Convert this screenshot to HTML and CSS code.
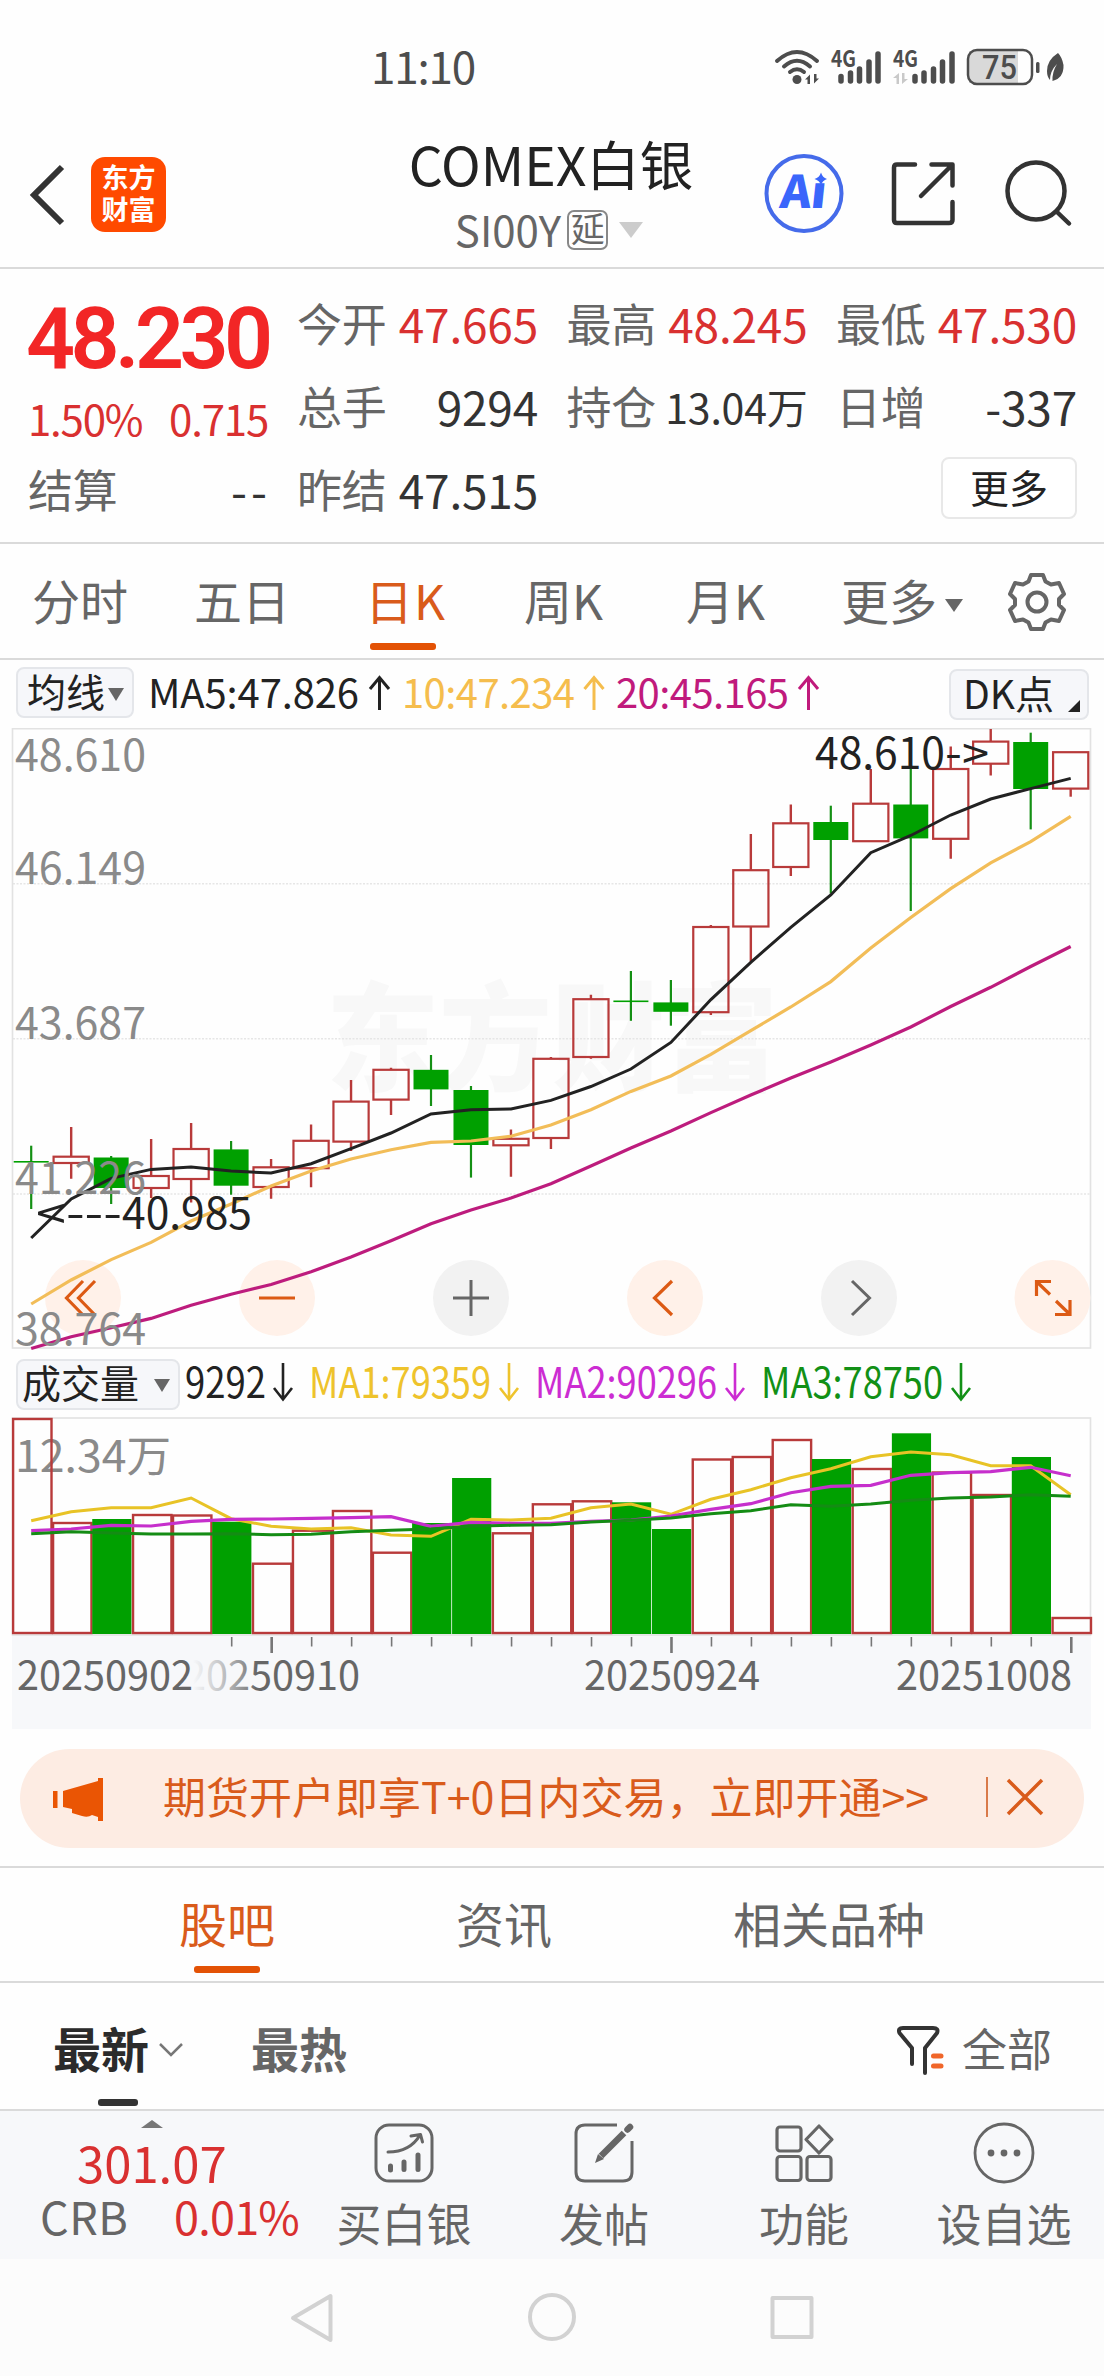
FILE: index.html
```html
<!DOCTYPE html>
<html lang="zh-CN">
<head>
  <meta charset="UTF-8">
  <meta name="viewport" content="width=device-width, initial-scale=1.0">
  <title>COMEX白银</title>
  <link rel="stylesheet" href="styles.css">
</head>
<body>
  <div class="status-bar">
    <span class="time">11:10</span>
    <svg class="status-icons" width="300" height="44" viewBox="770 45 300 44">
      <g fill="none" stroke="#4d4d4d" stroke-width="4" stroke-linecap="round">
        <path d="M777 61 Q797 43 817 61"/>
        <path d="M784 66.500 Q797 55 810 66.500"/>
        <path d="M790 72 Q797 66.500 804 72"/>
      </g>
      <g fill="#4d4d4d">
        <circle cx="797" cy="79.500" r="4.500"/>
        <path d="M805 79.500 l5 -5 v9.500 h-2.500 v-4.500zM819 78.500 l-5 5 v-9.500 h2.500 v4.500z"/>
        <text class="net" x="831" y="67" textLength="25" lengthAdjust="spacingAndGlyphs">4G</text>
        <text class="net" x="893" y="67" textLength="25" lengthAdjust="spacingAndGlyphs">4G</text>
      </g>
      <path fill="#c9c9c9" d="M893 78 l6 -5 v11 h-2.500 v-6zM908 79 l-6 5 v-11 h2.500 v6z"/>
      <g stroke="#4d4d4d" stroke-width="5.500" stroke-linecap="round">
        <path d="M841 76.500V81M850.500 73V81M859.500 69V81M869 62V81M878 54V81"/>
        <path d="M915 76.500V81M924 73V81M933.500 69V81M942.500 62V81M952 54V81"/>
      </g>
      <rect x="969" y="51" width="49" height="32" fill="#d9d9d9"/>
      <rect x="968" y="50" width="64" height="34" rx="9" fill="none" stroke="#4d4d4d" stroke-width="2.500"/>
      <text class="battery" x="982" y="79" textLength="35" lengthAdjust="spacingAndGlyphs">75</text>
      <rect x="1036" y="62" width="3.500" height="11" rx="1.500" fill="#4d4d4d"/>
      <path fill="#4d4d4d" d="M1058 53 Q1047 60 1047 71 Q1047 77 1050 80 Q1050 71 1057 64 Q1052 72 1052.500 81 Q1064 78 1063.500 65 Q1062 57 1058 53z"/>
    </svg>
  </div>

  <header>
    <svg class="back" width="36" height="62" viewBox="0 0 36 62"><path d="M34 3 L6 31 L34 59" fill="none" stroke="#333" stroke-width="6"/></svg>
    <div class="logo"><span>东方</span><span>财富</span></div>
    <div class="title">
      <h1>COMEX白银</h1>
      <p><span>SI00Y</span><i>延</i><b></b></p>
    </div>
    <svg class="header-icons" width="320" height="84" viewBox="760 151 320 84" fill="none">
      <circle cx="804" cy="193.500" r="37.500" stroke="#456bea" stroke-width="4"/>
      <text class="ai" transform="translate(779 208) skewX(-6)" textLength="46" lengthAdjust="spacingAndGlyphs">Aı</text>
      <path fill="#3a66fb" d="M821 172.500 Q822.500 177.500 827 179 Q822.500 180.500 821 185 Q819.500 180.500 814.500 179 Q819.500 177.500 821 172.500z"/>
      <g stroke="#333" stroke-width="4.500" stroke-linecap="round" stroke-linejoin="round">
        <path d="M915 164.500H897Q894 164.500 894 167.500V220Q894 223 897 223H949Q952.500 223 952.500 220V202"/>
        <path d="M931.500 164.500H952.500V185.500M952 165L921 196"/>
        <circle cx="1036" cy="191" r="28.500"/>
        <path d="M1057 212L1069 223.500"/>
      </g>
    </svg>
  </header>

  <section class="quote">
    <div class="price-col">
      <strong>48.230</strong>
      <div class="change"><span>1.50%</span><span>0.715</span></div>
      <div class="cell"><label>结算</label><span class="dashes">--</span></div>
    </div>
    <div class="cells">
      <div class="cell up"><label>今开</label><span>47.665</span></div>
      <div class="cell up"><label>最高</label><span>48.245</span></div>
      <div class="cell up"><label>最低</label><span>47.530</span></div>
      <div class="cell"><label>总手</label><span>9294</span></div>
      <div class="cell"><label>持仓</label><span class="small">13.04万</span></div>
      <div class="cell"><label>日增</label><span>-337</span></div>
      <div class="cell"><label>昨结</label><span>47.515</span></div>
      <button class="more">更多</button>
    </div>
  </section>

  <nav class="period">
    <a>分时</a>
    <a>五日</a>
    <a class="active">日K</a>
    <a>周K</a>
    <a>月K</a>
    <a>更多<i class="down"></i></a>
    <svg width="60" height="60" viewBox="-30 -30 60 60" fill="none" stroke="#666" stroke-width="4" stroke-linejoin="round">
      <path d="M-6 -27H6L8.500 -20.500L14 -17.500L22 -19L27 -8L22 -3V3L27 8L22 19L14 17.500L8.500 20.500L6 27H-6L-8.500 20.500L-14 17.500L-22 19L-27 8L-22 3V-3L-27 -8L-22 -19L-14 -17.500L-8.500 -20.500z"/>
      <circle r="9.500"/>
    </svg>
  </nav>

  <div class="indicator">
    <span class="pick">均线<i class="down"></i></span>
    <svg width="700" height="68" viewBox="140 660 700 68">
      <g class="ma-text">
        <text x="148" y="708" fill="#222" textLength="211">MA5:47.826</text>
        <text x="402" y="708" fill="#f5bd4d" textLength="173">10:47.234</text>
        <text x="616" y="708" fill="#c01a7c" textLength="173">20:45.165</text>
      </g>
      <g fill="none" stroke-width="3">
        <path stroke="#222" d="M379.500 710V678M370 689L379.500 677.500L389 689"/>
        <path stroke="#f5bd4d" d="M594 710V678M584.500 689L594 677.500L603.500 689"/>
        <path stroke="#c01a7c" d="M808.500 710V678M799 689L808.500 677.500L818 689"/>
      </g>
    </svg>
    <span class="pick dk">DK点<i class="corner"></i></span>
  </div>

  <svg id="kline" class="chart" width="1104" height="624" viewBox="0 728 1104 624"></svg>

  <div class="indicator volume-bar">
    <span class="pick">成交量<i class="down"></i></span>
    <svg width="820" height="64" viewBox="180 1352 820 64">
      <g class="vol-text">
        <text x="185" y="1398" fill="#222" textLength="81" lengthAdjust="spacingAndGlyphs">9292</text>
        <text x="309" y="1398" fill="#eec32c" textLength="182" lengthAdjust="spacingAndGlyphs">MA1:79359</text>
        <text x="535" y="1398" fill="#cc2cd2" textLength="182" lengthAdjust="spacingAndGlyphs">MA2:90296</text>
        <text x="761" y="1398" fill="#129016" textLength="182" lengthAdjust="spacingAndGlyphs">MA3:78750</text>
      </g>
      <g fill="none" stroke-width="2.600">
        <path stroke="#222" d="M283 1363V1399M274 1388L283 1399.500L292 1388"/>
        <path stroke="#eec32c" d="M509 1363V1399M500 1388L509 1399.500L518 1388"/>
        <path stroke="#cc2cd2" d="M735 1363V1399M726 1388L735 1399.500L744 1388"/>
        <path stroke="#129016" d="M961 1363V1399M952 1388L961 1399.500L970 1388"/>
      </g>
    </svg>
  </div>

  <svg id="volume" class="chart" width="1104" height="314" viewBox="0 1416 1104 314"></svg>

  <div class="banner">
    <svg width="54" height="46" viewBox="52 1775 54 46" fill="#ea5504">
      <rect x="53" y="1790" width="4.500" height="17"/>
      <path d="M63 1790L98 1780V1777H103V1820H98V1816L92 1814Q88 1817 82 1815L72 1812V1808L63 1806z"/>
    </svg>
    <span class="banner-text">期货开户即享T+0日内交易，立即开通&gt;&gt;</span>
    <i class="bar"></i>
    <svg width="40" height="40" viewBox="0 0 40 40"><path d="M3 3L37 37M37 3L3 37" stroke="#d95b1b" stroke-width="3.500"/></svg>
  </div>

  <nav class="sections">
    <a class="active">股吧</a>
    <a>资讯</a>
    <a>相关品种</a>
  </nav>

  <div class="filter">
    <a class="active">最新</a>
    <svg class="chev" width="26" height="16" viewBox="0 0 26 16"><path d="M2 2L13 13L24 2" fill="none" stroke="#777" stroke-width="2.500"/></svg>
    <a>最热</a>
    <svg class="funnel" width="50" height="52" viewBox="895 2025 50 52" fill="none" stroke-linecap="round" stroke-linejoin="round">
      <path stroke="#333" stroke-width="4" d="M911 2064V2048L898.500 2033Q896.500 2028 902 2028H932Q938 2028 936 2033L924 2048V2073"/>
      <path stroke="#f0662a" stroke-width="5" d="M932.500 2056H940M932.500 2066H940"/>
    </svg>
    <span>全部</span>
  </div>

  <footer>
    <div class="index">
      <i class="up-arrow"></i>
      <div class="value">301.07</div>
      <div class="row"><span>CRB</span><b>0.01%</b></div>
    </div>
    <div class="item">
      <svg width="60" height="60" viewBox="0 0 60 60" fill="none" stroke="#666" stroke-width="3" stroke-linecap="round" stroke-linejoin="round">
        <rect x="2" y="2" width="56" height="56" rx="13"/>
        <path d="M14 29Q36 29 46 12M37 13L46.500 11.500L48.500 19"/>
        <path stroke-width="5" d="M16.500 43V47M30 39V46.500M44 32V46.500"/>
      </svg>
      <span>买白银</span>
    </div>
    <div class="item">
      <svg width="60" height="60" viewBox="0 0 60 60" fill="none" stroke="#666" stroke-width="3">
        <path d="M43 2H11Q2 2 2 11V49Q2 58 11 58H49Q58 58 58 49V18"/>
        <path d="M27 33L50 10" stroke-width="6.500"/>
        <path d="M53.500 6.500L56 4" stroke-width="6.500" stroke-linecap="round"/>
        <path d="M21 40L24 31L30 36z" fill="#666" stroke="none"/>
      </svg>
      <span>发帖</span>
    </div>
    <div class="item">
      <svg width="60" height="60" viewBox="0 0 60 60" fill="none" stroke="#666" stroke-width="3.200" stroke-linejoin="round">
        <rect x="3" y="4" width="24" height="24" rx="3"/>
        <rect x="3" y="33.500" width="24" height="24" rx="3"/>
        <rect x="33" y="33.500" width="24" height="24" rx="3"/>
        <path d="M45 3L58 16.500L45 30L32 16.500z"/>
      </svg>
      <span>功能</span>
    </div>
    <div class="item">
      <svg width="62" height="60" viewBox="0 0 62 60">
        <circle cx="31" cy="30" r="29" fill="none" stroke="#666" stroke-width="2.800"/>
        <g fill="#666"><circle cx="18" cy="30" r="3.400"/><circle cx="31" cy="30" r="3.400"/><circle cx="44" cy="30" r="3.400"/></g>
      </svg>
      <span>设自选</span>
    </div>
  </footer>

  <div class="system-nav">
    <svg width="530" height="56" viewBox="287 2290 530 56" fill="none" stroke="#d2d2d2" stroke-width="4" stroke-linejoin="round">
      <path d="M330.500 2296V2340L293 2318z"/>
      <circle cx="552" cy="2317" r="22"/>
      <rect x="772.500" y="2298" width="39" height="39"/>
    </svg>
  </div>

  <script src="script.js"></script>
</body>
</html>
```
FILE: styles.css
```css
* { box-sizing: border-box; margin: 0; padding: 0; }
body { width: 1104px; height: 2376px; overflow: hidden; background: #fefefe; color: #333; font-family: "Noto Sans CJK SC", "Noto Sans", sans-serif; }
svg { display: block; flex: none; overflow: visible; }
svg text { font-family: "Noto Sans CJK SC", "Noto Sans", sans-serif; }
i, label { font-style: normal; }

.down { display: inline-block; border-left: 8px solid transparent; border-right: 8px solid transparent; border-top: 13px solid #666; }

.status-bar { height: 110px; display: flex; padding: 45px 34px 0 371px; justify-content: space-between; }
.time { font-size: 44px; line-height: 40px; letter-spacing: -1.2px; color: #4d4d4d; }
.net { font-size: 23px; font-weight: bold; }
.battery { font-family: Roboto, sans-serif; font-size: 34px; font-weight: 500; fill: #4d4d4d; }

header { height: 159px; display: flex; align-items: flex-start; padding: 0 24px 0 28px; border-bottom: 2px solid #dadada; }
.back { margin-top: 54px; }
.logo { flex: none; width: 75px; height: 75px; margin: 47px 0 0 27px; padding-top: 4px; border-radius: 14px; background: #ff4a00; color: #fff; display: flex; flex-direction: column; align-items: center; font-size: 27px; font-weight: bold; line-height: 32px; }
.title { width: 592px; display: flex; flex-direction: column; align-items: center; margin-top: 18px; padding-left: 178px; }
.title h1 { font-size: 53.5px; font-weight: 400; line-height: 70px; color: #222; white-space: nowrap; }
.title p { display: flex; align-items: center; height: 63px; color: #666; font-size: 42px; line-height: 54px; margin-right: 4px; }
.title p span { margin-top: -2px; }
.title p i { width: 41px; height: 40px; margin-left: 6px; border: 2px solid #888; border-radius: 7px; font-size: 34px; line-height: 32px; text-align: center; }
.title p b { margin-left: 11px; border-left: 12px solid transparent; border-right: 12px solid transparent; border-top: 16px solid #ccc; }
.header-icons { margin: 41px 0 0 auto; }
.ai { font-size: 45px; font-weight: 900; fill: #3a66fb; }

.quote { height: 275px; display: flex; padding: 12px 26px 0 28px; border-bottom: 2px solid #dadada; }
.price-col { width: 240px; margin-right: 29px; }
.price-col strong { display: block; height: 102px; line-height: 115px; font-family: Roboto, sans-serif; font-weight: 600; font-size: 86px; letter-spacing: -4.6px; color: #f22626; margin-left: -2px; }
.change { height: 64px; display: flex; justify-content: space-between; font-size: 42px; line-height: 70px; letter-spacing: -1.2px; color: #d93030; }
.cells { display: grid; grid-template-columns: repeat(3, 241px); column-gap: 28.500px; grid-auto-rows: 83px; }
.cell { height: 83px; display: flex; justify-content: space-between; align-items: center; font-size: 46px; letter-spacing: -0.2px; color: #333; }
.cell label { font-size: 45px; color: #666; }
.cell .small { font-size: 41px; }
.cell .dashes { letter-spacing: 4px; margin-right: -3px; }
.cell.up span { color: #d93030; }
.more { grid-column: 3; justify-self: end; width: 136px; height: 62px; margin-top: 10px; border: 2px solid #e8e8e8; border-radius: 8px; background: #fff; font-family: inherit; font-size: 39px; line-height: 50px; padding-bottom: 4px; color: #222; }

.period { height: 116px; display: grid; grid-template-columns: 162px 174px 156px 162px 155px 166px 60px; padding-left: 32px; border-bottom: 2px solid #dadada; font-size: 48px; line-height: 110px; color: #666; }
.period .active, .sections .active { color: #d95b1b; position: relative; }
.period .active { letter-spacing: 1px; margin-left: -3px; }
.period .active::after, .sections .active::after { content: ""; position: absolute; left: 5px; bottom: 8px; width: 66px; height: 7px; border-radius: 3px; background: #e35205; }
.period .down { margin: 0 0 8px 8px; border-left-width: 9px; border-right-width: 9px; }
.period svg { margin: 28px 0 0 0; }

.indicator { height: 68px; display: flex; align-items: flex-start; padding: 7px 0 0 16px; }
.indicator svg { margin-top: -7px; }
.pick { flex: none; width: 118px; height: 51px; padding-left: 9px; border: 2px solid #e4e6ea; border-radius: 8px; background: #f6f7fa; font-size: 39px; line-height: 43px; color: #222; white-space: nowrap; }
.pick + svg { margin-left: 6px; }
.pick .down { margin: 0 0 6px 3px; }
.pick.dk { position: relative; width: 140px; margin: 2px 0 0 109px; padding-left: 12px; }
.corner { position: absolute; right: 7px; bottom: 6px; border-left: 12px solid transparent; border-bottom: 12px solid #222; }
.ma-text { font-size: 40px; }
.vol-text { font-size: 42px; }
.volume-bar { height: 64px; }
.volume-bar .pick { width: 164px; padding-left: 4px; line-height: 41px; }
.volume-bar .pick .down { margin-left: 15px; }
.volume-bar .pick + svg { margin-left: 0; }

.chart { overflow: hidden; }
.axis { font-size: 43px; fill: #8a8a8a; }
.mark { font-size: 43px; fill: #222; }
.date { font-size: 40px; fill: #666; }
.watermark { font-size: 118px; font-weight: 900; fill: #f8f8f8; }

.banner { height: 99px; margin: 19px 20px 18px; padding: 0 39px 0 32px; border-radius: 50px; background: #fdece3; display: flex; align-items: center; }
.banner-text { margin: 0 auto 8px 57px; font-size: 43px; line-height: 60px; color: #d95b1b; white-space: nowrap; }
.bar { width: 2px; height: 40px; margin: 0 17px 4px 0; background: #d97a4a; }
.banner > svg:last-child { margin-bottom: 3px; }

.sections { height: 117px; display: flex; gap: 181px; padding-left: 179px; border-top: 2px solid #dadada; border-bottom: 2px solid #dadada; font-size: 48px; line-height: 108px; color: #666; }
.sections .active::after { left: 15px; }

.filter { height: 126px; display: flex; align-items: flex-start; padding: 0 52px 0 53px; font-size: 48px; line-height: 128px; color: #666; font-weight: bold; }
.filter .active { color: #2b2b2b; position: relative; }
.filter .active::after { content: ""; position: absolute; left: 45px; top: 116px; width: 40px; height: 7px; border-radius: 3px; background: #333; }
.filter .chev { margin: 59px 67px 0 9px; }
.filter .funnel { margin: 42px 16px 0 auto; }
.filter span { font-size: 45px; font-weight: 400; line-height: 130px; }

footer { height: 150px; display: flex; background: #f7f8fa; border-top: 2px solid #dadada; }
.index { width: 304px; display: flex; flex-direction: column; padding-left: 40px; color: #d93030; }
.up-arrow { width: 0; margin: 9px 0 0 101px; border-left: 11px solid transparent; border-right: 11px solid transparent; border-bottom: 8px solid #777; }
.value { margin: 2px 0 0 37px; font-size: 49px; line-height: 64px; }
.row { display: flex; justify-content: space-between; padding-right: 5px; font-size: 45px; line-height: 44px; }
.row span { color: #666; letter-spacing: 0.5px; }
.row b { font-weight: 400; letter-spacing: -0.8px; }
.item { width: 200px; display: flex; flex-direction: column; align-items: center; padding-top: 12px; font-size: 45px; line-height: 56px; color: #666; }
.item span { margin-top: 12px; }

.system-nav { height: 117px; display: flex; justify-content: center; padding-top: 31px; background: #fcfcfc; }
```
FILE: script.js
```js
const RED = "#b83a3a";
const GREEN = "#00a000";
const STEP = 39.98;
const FIRST = 31.2;
const cx = i => FIRST + i * STEP;

// [up, high, bodyTop, bodyBottom, low]
const candles = [
  [0, 1145.7, 1161, 1162.6, 1209], [1, 1127, 1156.7, 1163, 1178.8], [0, 1156, 1157.5, 1188, 1204],
  [1, 1139, 1176, 1188, 1198], [1, 1123, 1149, 1179, 1202.5], [0, 1141, 1149.4, 1185.7, 1194.7],
  [1, 1159, 1167.3, 1187, 1198.8], [1, 1124.5, 1140.8, 1168.2, 1187.3], [1, 1080, 1101.6, 1141.6, 1151],
  [1, 1067.8, 1069.8, 1099.6, 1115], [0, 1055, 1069.8, 1089.4, 1106], [0, 1086, 1090, 1145, 1177.6],
  [1, 1129.4, 1138.8, 1145.3, 1176.7], [1, 1057, 1058.8, 1138, 1149], [1, 994.7, 999.2, 1057, 1058.8],
  [0, 971, 1000.5, 1002.1, 1020.8], [0, 980, 1002.4, 1011.8, 1025.7], [1, 925, 927, 1012.2, 1015],
  [1, 834, 870.2, 926.5, 961.6], [1, 804.5, 823.3, 867, 876], [0, 805.7, 822, 840, 893.5],
  [1, 769, 803.7, 841.2, 841.2], [0, 767, 804.5, 838.4, 911], [1, 746.5, 769, 838.8, 858.8],
  [1, 729, 741.6, 763.7, 775.5], [0, 732.7, 742, 789, 829.4], [1, 752.2, 752.2, 788.6, 796.7]
];

const ma5 = [1238, 1199, 1178.4, 1169.4, 1167, 1171, 1173, 1163.7, 1148.6, 1133, 1113.9, 1109.8, 1109, 1100.4, 1086.5, 1069, 1042.4, 999.6, 962.4, 927.3, 895, 852.7, 835.5, 815, 799, 788.6, 778.4];
const ma10 = [1304, 1280, 1259.6, 1242.4, 1221, 1204, 1186, 1171, 1159, 1149.8, 1142.4, 1141, 1136.3, 1125, 1109.8, 1091.4, 1076, 1054.3, 1030.6, 1007, 981.6, 948, 917.6, 888.6, 862.9, 841.6, 816.3];
const ma20 = [1348.5, 1336.7, 1327.8, 1318.4, 1305.3, 1294.3, 1284.5, 1271.8, 1257, 1240.8, 1223.7, 1210, 1198, 1183.7, 1166, 1148, 1131, 1112.6, 1095, 1078, 1062, 1045, 1027, 1006.5, 987.3, 966.5, 946.5];

const volumes = [1419, 1523, 1519, 1515, 1515.5, 1521.7, 1563.7, 1530.7, 1511, 1552.7, 1523, 1478, 1533.3, 1504.3, 1501.3, 1502.3, 1529, 1459.5, 1457, 1440, 1459, 1469, 1433.3, 1472.5, 1495, 1457, 1618];
const volGreen = [2, 5, 10, 11, 15, 16, 20, 22, 25];
const vma1 = [1520.7, 1511.7, 1507.7, 1507.7, 1498, 1518.7, 1526.3, 1529, 1527.7, 1535, 1536.3, 1519.3, 1520, 1518.3, 1507.7, 1504, 1514.3, 1499.3, 1489.7, 1477.7, 1468.7, 1456.7, 1452, 1454.7, 1465.7, 1465.7, 1494.7];
const vma2 = [1530.7, 1529, 1525.3, 1526, 1521.3, 1519.3, 1519, 1518.3, 1517.7, 1516.7, 1526.3, 1522.3, 1523.3, 1523.3, 1521.3, 1520, 1516, 1509.3, 1503.7, 1492.7, 1486.3, 1485.3, 1475.3, 1472.7, 1471.7, 1467.3, 1475.7];
const vma3 = [1533.7, 1531.7, 1533, 1534, 1534, 1533.7, 1534.7, 1534.3, 1531.7, 1530.3, 1529, 1526.3, 1525.3, 1524.7, 1522, 1520.3, 1518, 1513.7, 1510.7, 1504.7, 1506.3, 1504, 1500.3, 1498, 1497, 1494.7, 1496.3];

function line(values, color, width) {
  const pts = values.map((y, i) => `${cx(i).toFixed(1)},${y}`).join(" ");
  return `<polyline points="${pts}" fill="none" stroke="${color}" stroke-width="${width}"/>`;
}

function label(cls, x, y, text, width, extra = "") {
  return `<text class="${cls}" x="${x}" y="${y}" textLength="${width}" lengthAdjust="spacingAndGlyphs" ${extra}>${text}</text>`;
}

function renderKline() {
  let s = label("watermark", 326, 1082, "东方财富", 452);
  [883.7, 1038.8, 1193.9].forEach(y => {
    s += `<path d="M13 ${y}H1090" stroke="#e6e6e6" stroke-width="1.5" stroke-dasharray="2 1.5"/>`;
  });
  s += `<rect x="12.5" y="728.7" width="1078" height="619.3" fill="none" stroke="#e2e2e2" stroke-width="1.6"/>`;

  // floating zoom / pan buttons
  [[83, 1], [277, 1], [471, 0], [665, 1], [859, 0], [1052.5, 1]].forEach(([x, warm]) => {
    s += `<circle cx="${x}" cy="1298" r="38" fill="${warm ? "#fff1e9" : "#f2f2f2"}"/>`;
  });
  s += `<g fill="none" stroke="#dc5a14" stroke-width="3.2">
    <path d="M83 1281L66.500 1298L83 1315M95 1281L78.500 1298L95 1315M259 1298H295"/>
    <path d="M672 1281L654.500 1298L672 1315"/>
    <path d="M1036.500 1296V1281.500H1051M1037 1282L1050 1294.500M1056 1301L1069.500 1314M1070 1300V1314.500H1055"/>
  </g>
  <path d="M453 1298H489M471 1280V1316M852 1281L869.500 1298L852 1315" fill="none" stroke="#666" stroke-width="3"/>`;

  candles.forEach(([up, high, top, bottom, low], i) => {
    const x = cx(i);
    if (up) {
      s += `<path d="M${x} ${high}V${top}M${x} ${bottom}V${low}" stroke="${RED}" stroke-width="2.4"/>`;
      s += `<rect x="${x - 17.6}" y="${top}" width="35.2" height="${bottom - top}" fill="none" stroke="${RED}" stroke-width="2.2"/>`;
    } else {
      s += `<path d="M${x} ${high}V${low}" stroke="#149014" stroke-width="2.2"/>`;
      s += `<rect x="${x - 17.5}" y="${top}" width="35" height="${bottom - top}" fill="${GREEN}"/>`;
    }
  });
  s += line(ma5, "#222", 3) + line(ma10, "#f2bd58", 3.2) + line(ma20, "#bd1c7d", 3.2);

  [["48.610", 771], ["46.149", 884], ["43.687", 1038.5], ["41.226", 1193.5], ["38.764", 1345]].forEach(([t, y]) => {
    s += label("axis", 15, y, t, 131);
  });
  s += label("mark", 36, 1229, "&lt;---", 86) + label("mark", 122, 1229, "40.985", 130);
  s += label("mark", 815, 769, "48.610", 130) + label("mark", 945, 769, "-&gt;", 44);
  document.getElementById("kline").innerHTML = s;
}

function renderVolume() {
  let s = `<rect x="12" y="1636" width="1079" height="93" fill="#f7f8fa"/>`;
  s += `<rect x="12.500" y="1418" width="1078" height="217" fill="none" stroke="#e2e2e2" stroke-width="1.6"/>`;
  s += label("axis", 15, 1472, "12.34万", 156);
  volumes.forEach((y, i) => {
    const x = 12.3 + i * STEP;
    if (volGreen.includes(i)) {
      s += `<rect x="${x}" y="${y}" width="39.2" height="${1634 - y}" fill="${GREEN}"/>`;
    } else {
      s += `<rect x="${x + 0.8}" y="${y}" width="38.4" height="${1633 - y}" fill="none" stroke="${RED}" stroke-width="2.4"/>`;
    }
  });
  s += line(vma1, "#e8c326", 3) + line(vma2, "#c62fcc", 3.2) + line(vma3, "#148c14", 3);
  for (let i = 5; i < 27; i++) {
    const major = i % 10 === 6;
    s += `<path d="M${cx(i) + 0.6} 1637V${major ? 1653 : 1646.5}" stroke="#777" stroke-width="${major ? 2.6 : 1.6}"/>`;
  }
  s += `<linearGradient id="fade" gradientUnits="userSpaceOnUse" x1="193" x2="256" y1="0" y2="0">
    <stop offset="0" stop-color="#666" stop-opacity="0"/><stop offset="0.45" stop-color="#666" stop-opacity="0.35"/>
    <stop offset="0.9" stop-color="#666" stop-opacity="0.8"/><stop offset="1" stop-color="#666"/></linearGradient>`;
  s += label("date", 17, 1690, "20250902", 176);
  s += label("date", 184, 1690, "20250910", 176, `style="fill:url(#fade)"`);
  s += label("date", 584, 1690, "20250924", 176) + label("date", 896, 1690, "20251008", 176);
  document.getElementById("volume").innerHTML = s;
}

renderKline();
renderVolume();
```
